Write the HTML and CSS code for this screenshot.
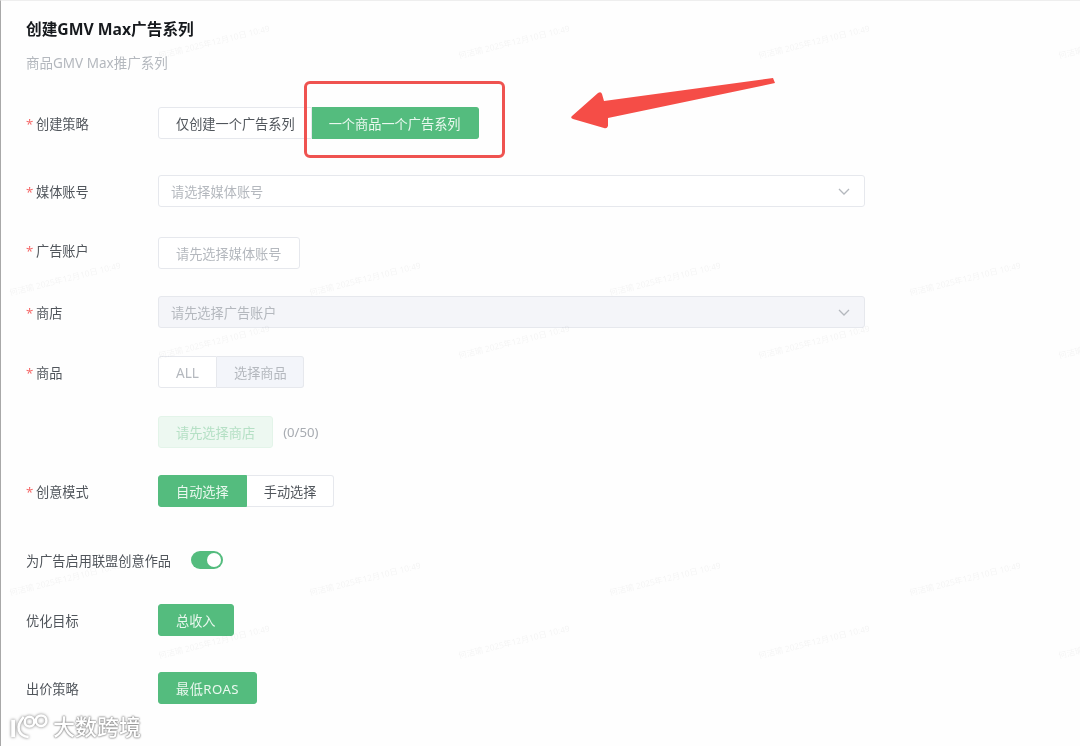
FILE: index.html
```html
<!DOCTYPE html>
<html lang="zh-CN">
<head>
    <meta charset="UTF-8">
    <meta name="viewport" content="width=device-width, initial-scale=1.0">
    <title>创建GMV Max广告系列</title>
    <link rel="stylesheet" href="styles.css">
</head>
<body>
<div class="page">
    <h1 class="title">创建GMV Max广告系列</h1>
    <p class="subtitle">商品GMV Max推广系列</p>

    <div class="row row-first">
        <div class="label"><span class="star">*</span>创建策略</div>
        <div class="group">
            <div class="btn btn-left btn-tight">仅创建一个广告系列</div>
            <div class="btn btn-right btn-green btn-long">一个商品一个广告系列</div>
        </div>
    </div>

    <div class="row row-wide">
        <div class="label"><span class="star">*</span>媒体账号</div>
        <div class="select">
            <span>请选择媒体账号</span>
            <svg class="chevron" viewBox="0 0 12 7"><polyline points="1,1 6,6 11,1"/></svg>
        </div>
    </div>

    <div class="row row-mid">
        <div class="label label-up"><span class="star">*</span>广告账户</div>
        <div class="btn btn-muted">请先选择媒体账号</div>
    </div>

    <div class="row row-tight">
        <div class="label"><span class="star">*</span>商店</div>
        <div class="select select-disabled">
            <span>请先选择广告账户</span>
            <svg class="chevron" viewBox="0 0 12 7"><polyline points="1,1 6,6 11,1"/></svg>
        </div>
    </div>

    <div class="row">
        <div class="label"><span class="star">*</span>商品</div>
        <div class="group">
            <div class="btn btn-left btn-muted btn-all">ALL</div>
            <div class="btn btn-right btn-muted btn-off">选择商品</div>
        </div>
    </div>

    <div class="row">
        <div class="label"></div>
        <div class="btn btn-pale">请先选择商店</div>
        <span class="count">(0/50)</span>
    </div>

    <div class="row row-tight">
        <div class="label"><span class="star">*</span>创意模式</div>
        <div class="group">
            <div class="btn btn-left btn-green">自动选择</div>
            <div class="btn btn-right">手动选择</div>
        </div>
    </div>

    <div class="row row-switch">
        <div class="label label-auto">为广告启用联盟创意作品</div>
        <div class="switch"><span class="knob"></span></div>
    </div>

    <div class="row">
        <div class="label">优化目标</div>
        <div class="btn btn-green">总收入</div>
    </div>

    <div class="row row-wide">
        <div class="label">出价策略</div>
        <div class="btn btn-green btn-roas">最低ROAS</div>
    </div>

    <!-- 标注 -->
    <div class="mark-box"></div>
    <svg class="mark-arrow" viewBox="0 0 210 56">
        <path d="M2 40 L28 17 Q31 15 32 18 L34 25 L203 2 L205 7 L38 42 L38 50 Q37 53 34 52 L3 43 Q0 42 2 40 Z"/>
    </svg>

    <!-- 水印 -->
    <div class="wm-layer">
        <div class="wm-row wm-a"><span>何洁瑜 2025年12月10日 10:49</span><span>何洁瑜 2025年12月10日 10:49</span><span>何洁瑜 2025年12月10日 10:49</span><span>何洁瑜 2025年12月10日 10:49</span></div>
        <div class="wm-row wm-b"><span>何洁瑜 2025年12月10日 10:49</span><span>何洁瑜 2025年12月10日 10:49</span><span>何洁瑜 2025年12月10日 10:49</span><span>何洁瑜 2025年12月10日 10:49</span></div>
        <div class="wm-row wm-a"><span>何洁瑜 2025年12月10日 10:49</span><span>何洁瑜 2025年12月10日 10:49</span><span>何洁瑜 2025年12月10日 10:49</span><span>何洁瑜 2025年12月10日 10:49</span></div>
        <div class="wm-row wm-b"><span>何洁瑜 2025年12月10日 10:49</span><span>何洁瑜 2025年12月10日 10:49</span><span>何洁瑜 2025年12月10日 10:49</span><span>何洁瑜 2025年12月10日 10:49</span></div>
        <div class="wm-row wm-a"><span>何洁瑜 2025年12月10日 10:49</span><span>何洁瑜 2025年12月10日 10:49</span><span>何洁瑜 2025年12月10日 10:49</span><span>何洁瑜 2025年12月10日 10:49</span></div>
    </div>

    <!-- 角标 -->
    <div class="brand">
        <svg class="brand-mark" viewBox="0 0 42 28">
            <path class="brand-bar" d="M3 7 V25"/>
            <path d="M14 4 Q7 12 9 18 Q11 24 19 25"/>
            <circle cx="20" cy="9" r="5"/>
            <circle cx="32" cy="8" r="5.5"/>
        </svg>
        <span class="brand-name">大数跨境</span>
    </div>
</div>
</body>
</html>
```

FILE: styles.css
```css
* {
    box-sizing: border-box;
}
body {
    margin: 0;
    background-color: #fefefe;
    font-family: "Noto Sans", "Noto Sans CJK SC", sans-serif;
    font-size: 13.2px;
    color: #50555b;
}
.page {
    position: relative;
    width: 1080px;
    height: 746px;
    padding: 18px 0 0 25px;
    overflow: hidden;
    border-left: 1px solid #a8a8a8;
    border-top: 1px solid #eeeeee;
    filter: blur(0.5px);
}
.title {
    margin: 0;
    font-size: 15.7px;
    line-height: 20px;
    font-weight: 700;
    color: #16191d;
}
.subtitle {
    margin: 14px 0 0;
    font-size: 13.5px;
    line-height: 20px;
    color: #b4b8be;
}
.row {
    display: flex;
    align-items: center;
    height: 32px;
    margin-top: 28px;
}
.row-first {
    margin-top: 34px;
}
.row-wide {
    margin-top: 36px;
}
.row-mid {
    margin-top: 30px;
}
.row-tight {
    margin-top: 27px;
}
.row-switch {
    margin-top: 37px;
}
.label {
    width: 132px;
    flex-shrink: 0;
    white-space: nowrap;
}
.label-up {
    margin-top: -6px;
}
.label-auto {
    width: auto;
    margin-right: 20px;
}
.star {
    display: inline-block;
    width: 10px;
    color: #f56c6c;
}
.group {
    display: flex;
}
.btn {
    display: flex;
    align-items: center;
    height: 32px;
    padding: 0 17px;
    background: #fff;
    border: 1px solid #e6e8ed;
    border-radius: 3px;
    white-space: nowrap;
    color: #50555b;
}
.btn-left {
    border-radius: 3px 0 0 3px;
}
.btn-right {
    padding-right: 16px;
    border-left: 0;
    border-radius: 0 3px 3px 0;
}
.btn-tight {
    padding-right: 16px;
}
.btn-long {
    padding-right: 17px;
}
.btn-green {
    background: #54bc7e;
    border-color: #54bc7e;
    color: #eaf8ef;
}
.btn-roas {
    letter-spacing: 0.45px;
}
.btn-muted {
    color: #b4b8be;
}
.btn-all {
    width: 59px;
    justify-content: center;
    padding: 0;
    font-size: 13.6px;
}
.btn-off {
    background: #f3f5fa;
}
.btn-pale {
    background: #edf8f1;
    border-color: #e3f4e9;
    color: #b5e0c5;
}
.count {
    margin-left: 10px;
    color: #a8acb2;
}
.select {
    display: flex;
    align-items: center;
    justify-content: space-between;
    width: 707px;
    height: 32px;
    padding: 0 14px 0 12px;
    background: #fff;
    border: 1px solid #e6e8ed;
    border-radius: 3px;
    color: #b4b8be;
}
.select-disabled {
    background: #f4f5f9;
}
.chevron {
    width: 12px;
    height: 7px;
    fill: none;
    stroke: #b4b8be;
    stroke-width: 1.3;
}
.switch {
    display: flex;
    justify-content: flex-end;
    align-items: center;
    width: 32px;
    height: 18px;
    padding-right: 2px;
    background: #54bc7e;
    border-radius: 9px;
}
.knob {
    width: 14px;
    height: 14px;
    background: #fff;
    border-radius: 50%;
}
.mark-box {
    position: absolute;
    left: 303px;
    top: 80px;
    width: 201px;
    height: 77px;
    border: 3px solid #ef5350;
    border-radius: 6px;
}
.mark-arrow {
    position: absolute;
    left: 569px;
    top: 75px;
    width: 210px;
    height: 56px;
    fill: #f54d47;
}
.wm-layer {
    position: absolute;
    top: 0;
    left: 0;
    width: 1080px;
    height: 746px;
    padding-top: 21px;
    pointer-events: none;
}
.wm-row {
    display: flex;
    height: 40px;
    width: 1400px;
}
.wm-row span {
    width: 300px;
    flex-shrink: 0;
    line-height: 40px;
    text-align: center;
    font-size: 8.4px;
    white-space: nowrap;
    color: rgba(0, 0, 0, 0.045);
    transform: rotate(-14deg);
}
.wm-a {
    margin-top: 23px;
    margin-left: 63px;
}
.wm-a:first-child {
    margin-top: 0;
}
.wm-b {
    margin-top: 197px;
    margin-left: -86px;
}
.brand {
    position: absolute;
    left: 9px;
    top: 711px;
    display: flex;
    align-items: center;
    gap: 2px;
}
.brand-mark {
    width: 41px;
    height: 27px;
    fill: none;
    stroke: #fff;
    stroke-width: 2.6;
    filter: drop-shadow(0 0 1.5px #777);
}
.brand-bar {
    stroke-width: 4;
}
.brand-name {
    font-size: 22px;
    line-height: 28px;
    font-weight: 500;
    color: #fff;
    text-shadow: 0 0 2px #777, 0 0 2px #777;
}
```
